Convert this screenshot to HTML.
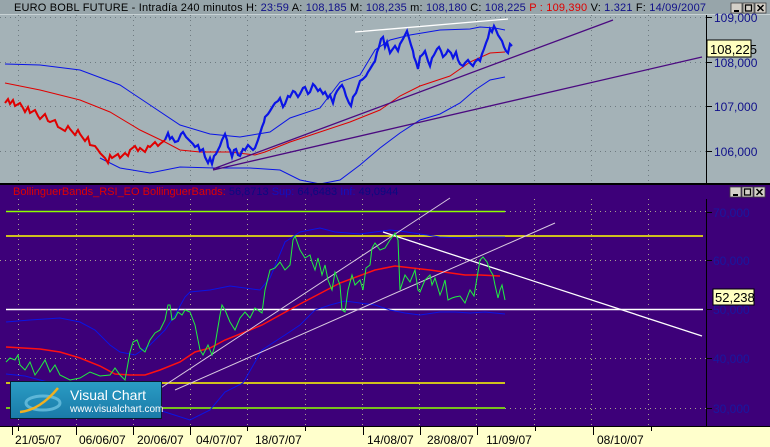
<!DOCTYPE html>
<html><head><meta charset="utf-8"><style>
html,body{margin:0;padding:0;width:770px;height:447px;overflow:hidden;background:#a4b2b7}
svg{display:block;font-family:"Liberation Sans",sans-serif}
</style></head><body>
<svg width="770" height="447" viewBox="0 0 770 447" xmlns="http://www.w3.org/2000/svg">
<rect x="0" y="0" width="770" height="184" fill="#a4b2b7"/>
<rect x="0" y="0" width="770" height="14" fill="#97a5aa"/>
<line x1="0" y1="14.5" x2="770" y2="14.5" stroke="#c8d2d5"/>
<text x="14" y="11" font-size="11" fill="#000" textLength="692" lengthAdjust="spacing">EURO BOBL FUTURE - Intradía 240 minutos  H: <tspan fill="#10108a">23:59</tspan>  A: <tspan fill="#10108a">108,185</tspan>  M: <tspan fill="#10108a">108,235</tspan>  m: <tspan fill="#10108a">108,180</tspan>  C: <tspan fill="#10108a">108,225</tspan>  <tspan fill="#e00000">P : 109,390</tspan>  V: <tspan fill="#10108a">1.321</tspan>  F: <tspan fill="#10108a">14/09/2007</tspan></text>
<g fill="#d4d0c8" stroke="#404040" stroke-width="0.8">
<rect x="731" y="3" width="11" height="10"/><rect x="743" y="3" width="11" height="10"/><rect x="755" y="3" width="11" height="10"/></g>
<line x1="734" y1="11" x2="739" y2="11" stroke="#000" stroke-width="2"/>
<rect x="745.5" y="5" width="6" height="6" fill="none" stroke="#000" stroke-width="1.3"/>
<path d="M757.5 5l6 6M763.5 5l-6 6" stroke="#000" stroke-width="1.5"/>
<g stroke="#6e7a80" stroke-dasharray="1 4" stroke-width="1">
<path d="M18.5 15V183M76.5 15V183M133.5 15V183M190.5 15V183M247.5 15V183M305.5 15V183M362.5 15V183M419.5 15V183M476.5 15V183M534.5 15V183M591.5 15V183M648.5 15V183"/>
<path d="M0 17.5H706M0 62.5H706M0 106.5H706M0 151.5H706"/>
</g>
<line x1="706.5" y1="15" x2="706.5" y2="184" stroke="#000"/>
<g font-size="12" fill="#10108a"><text x="714" y="22">109,000</text><text x="714" y="67">108,000</text><text x="714" y="111">107,000</text><text x="714" y="156">106,000</text></g>
<path d="M706 17.5h6M706 62.5h6M706 106.5h6M706 151.5h6" stroke="#000"/>
<polyline fill="none" stroke="#0a14e6" stroke-width="1" points="5,64 40,65 80,70 120,85 150,105 180,125 210,134 240,137 270,132 290,118 320,108 340,82 360,75 375,50 390,40 410,35 440,30 470,29 480,27 495,28 505,30"/>
<polyline fill="none" stroke="#0a14e6" stroke-width="1" points="100,158 120,168 150,173 180,167 215,168 250,168 280,170 300,180 320,184 340,180 360,165 380,148 400,133 420,120 440,114 460,103 475,90 490,80 505,77"/>
<polyline fill="none" stroke="#e00000" stroke-width="1" points="5,83 40,90 80,100 110,112 140,130 165,142 180,150 200,152 230,152 255,155 265,152 290,142 320,132 350,122 380,110 400,96 420,86 450,76 470,62 490,53 505,52"/>
<line x1="213" y1="169" x2="613" y2="20" stroke="#4b0a80" stroke-width="1.3"/>
<line x1="213" y1="170" x2="702" y2="57" stroke="#4b0a80" stroke-width="1.3"/>
<line x1="355" y1="32" x2="508" y2="19" stroke="#fff" stroke-width="1.3"/>
<polyline fill="none" stroke="#e00000" stroke-width="2" points="5,103 8,99 10,104 13,100 15,106 20,103 23,108 25,112 28,107 30,113 35,110 38,116 40,119 45,114 48,121 50,122 55,120 58,127 60,128 65,131 68,126 70,129 75,135 78,130 80,134 85,141 88,137 90,145 95,146 98,150 100,153 105,158 108,163 110,155 112,158 118,154 120,158 125,153 128,156 130,150 135,146 138,151 140,148 145,152 148,146 150,147 155,142 158,146 160,144 165,140"/>
<polyline fill="none" stroke="#0a14e6" stroke-width="2.2" points="165,140 168,133 170,139 172,137 175,142 178,141 181,134 183,132 186,137 190,141 193,144 195,147 198,145 200,151 203,149 205,157 208,163 210,158 212,164 214,156 216,154 218,150 220,146 222,140 225,134 227,140 228,147 230,150 232,157 234,150 236,149 238,155 240,156 243,149 245,150 248,145 250,147 253,150 255,148 258,140 262,127 264,122 265,117 268,114 270,111 273,106 275,103 278,101 280,98 283,107 285,104 288,96 290,97 293,91 295,92 298,97 300,94 303,88 305,87 308,94 310,92 313,84 315,86 318,91 320,89 323,94 325,92 328,98 330,95 333,103 335,95 337,91 340,87 342,85 344,89 346,96 349,103 351,106 353,97 356,93 358,87 360,81 363,79 366,76 368,72 370,69 373,64 375,61 377,52 379,47 381,39 383,37 385,47 387,42 390,53 392,50 395,46 398,51 400,44 403,39 405,35 407,31 409,38 411,45 413,51 414,57 416,62 418,69 420,57 423,54 425,51 428,61 430,66 432,58 434,55 437,49 439,47 441,51 443,57 446,54 448,50 451,53 453,58 456,52 458,60 460,64 463,66 465,63 468,60 470,63 473,66 475,62 478,59 480,61 482,54 484,49 486,43 488,38 490,29 492,32 494,26 496,30 498,35 500,38 502,41 504,47 506,51 508,53 510,44 512,46"/>
<rect x="707" y="40" width="44" height="17" fill="#ffffc0" stroke="#000"/>
<text x="710" y="54" font-size="13" fill="#000">108,225</text>
<rect x="0" y="183" width="770" height="2" fill="#000"/>
<rect x="0" y="185" width="770" height="241" fill="#3d0079"/>
<text x="13" y="195" font-size="11" fill="#e00000">BollinguerBands_RSI_EO  BollinguerBands: <tspan fill="#0a0a80">56,8713</tspan>  <tspan fill="#1010c0">Sup:</tspan> <tspan fill="#0a0a80">64,6483</tspan>  <tspan fill="#1010c0">Inf:</tspan> <tspan fill="#0a0a80">49,0944</tspan></text>
<g fill="#d4d0c8" stroke="#404040" stroke-width="0.8">
<rect x="730" y="187" width="11" height="10"/><rect x="742" y="187" width="11" height="10"/><rect x="754" y="187" width="11" height="10"/></g>
<line x1="733" y1="195" x2="738" y2="195" stroke="#000" stroke-width="2"/>
<rect x="744.5" y="189" width="6" height="6" fill="none" stroke="#000" stroke-width="1.3"/>
<path d="M756.5 189l6 6M762.5 189l-6 6" stroke="#000" stroke-width="1.5"/>
<g stroke="#a8a090" stroke-dasharray="1 4" stroke-width="1">
<path d="M18.5 199V426M76.5 199V426M133.5 199V426M190.5 199V426M247.5 199V426M305.5 199V426M362.5 199V426M419.5 199V426M476.5 199V426M534.5 199V426M591.5 199V426M648.5 199V426"/>
<path d="M0 260.5H706M0 358.5H706M505 211.5H706M505 408.5H706"/>
</g>
<line x1="706.5" y1="199" x2="706.5" y2="426" stroke="#000"/>
<g font-size="12" fill="#1818a0"><text x="713" y="217">70,000</text><text x="713" y="265">60,000</text><text x="713" y="314">50,000</text><text x="713" y="363">40,000</text><text x="713" y="413">30,000</text></g>
<path d="M706 212.5h6M706 260.5h6M706 309.5h6M706 358.5h6M706 408.5h6" stroke="#000"/>
<g stroke-width="1.5">
<line x1="6" y1="211.5" x2="505" y2="211.5" stroke="#8cff00"/>
<line x1="6" y1="236" x2="703" y2="236" stroke="#ffff00"/>
<line x1="6" y1="309.5" x2="703" y2="309.5" stroke="#fff"/>
<line x1="6" y1="383" x2="505" y2="383" stroke="#ffff00"/>
<line x1="6" y1="408" x2="505" y2="408" stroke="#8cff00"/>
</g>
<polyline fill="none" stroke="#0a14e6" stroke-width="1" points="6,322 30,320 60,318 80,322 95,330 110,345 120,352 135,355 150,345 165,330 175,315 185,297 190,292 210,290 230,286 245,288 260,290 270,278 285,242 300,232 320,228 335,232 360,234 375,232 390,230 400,231 420,234 440,237 460,238 480,237 505,237"/>
<polyline fill="none" stroke="#0a14e6" stroke-width="1" points="6,374 25,376 40,380 100,395 140,405 165,412 190,420 210,410 225,392 243,383 262,350 285,335 300,325 315,310 330,305 345,301 360,303 375,305 390,310 405,313 420,315 440,312 455,312 470,313 485,312 505,314"/>
<polyline fill="none" stroke="#ff1010" stroke-width="1.5" points="6,347 40,349 60,352 80,358 100,366 115,374 130,375 145,375 160,370 180,362 195,352 210,348 225,340 245,332 262,325 300,304 340,283 375,270 395,266 430,270 465,275 480,275 500,276"/>
<line x1="150" y1="395" x2="450" y2="198" stroke="#d8c8e0" stroke-width="1"/>
<line x1="175" y1="390" x2="555" y2="223" stroke="#d8c8e0" stroke-width="1"/>
<line x1="383" y1="232" x2="702" y2="336" stroke="#fff" stroke-width="1.3"/>
<polyline fill="none" stroke="#20f040" stroke-width="1" points="6,362 10,358 15,360 18,355 20,365 25,370 30,362 35,375 40,368 45,360 50,372 55,365 60,375 70,380 80,378 90,372 100,376 110,375 115,368 120,375 125,380 130,352 133,342 137,340 140,348 145,352 150,340 155,333 160,330 165,320 168,305 170,305 172,320 175,318 178,312 182,315 185,310 190,312 195,325 200,350 203,355 208,345 212,355 215,345 220,315 222,305 225,310 230,322 235,330 240,318 245,312 250,318 255,308 262,313 265,290 270,270 275,268 280,262 285,270 290,265 293,240 295,236 300,250 305,258 310,255 312,262 315,270 318,258 322,275 325,265 328,280 332,290 335,272 340,285 342,310 345,312 348,290 352,275 355,285 360,280 363,290 366,268 370,265 372,248 375,243 380,250 385,248 390,240 395,233 398,240 400,290 405,275 410,282 415,270 418,290 420,292 425,280 430,275 432,285 435,278 440,295 442,290 445,280 448,300 452,298 455,297 460,296 465,303 468,295 470,290 474,296 478,272 480,260 483,257 487,262 490,270 493,275 495,285 498,298 500,290 502,285 505,300"/>
<rect x="713" y="289" width="41" height="16" fill="#ffffc0" stroke="#000"/>
<text x="715" y="302" font-size="13" fill="#000">52,238</text>
<defs><linearGradient id="lg" x1="0" y1="0" x2="0" y2="1"><stop offset="0" stop-color="#2a9cc4"/><stop offset="1" stop-color="#1a7aa8"/></linearGradient></defs>
<rect x="10.5" y="381.5" width="151" height="37" fill="url(#lg)" stroke="#0a1a30"/>
<ellipse cx="43" cy="403" rx="17" ry="7" fill="none" stroke="#6cc0e0" stroke-width="3" opacity="0.8"/>
<path d="M20 412 Q40 410 58 388" stroke="#f0b020" stroke-width="2.5" fill="none"/>
<text x="70" y="400" font-size="14" fill="#fff">Visual Chart</text>
<text x="70" y="412" font-size="10" fill="#fff">www.visualchart.com</text>
<rect x="0" y="426" width="770" height="21" fill="#ffffcc"/>
<line x1="0" y1="426.5" x2="770" y2="426.5" stroke="#000"/>
<path d="M12.5 427v8M18.5 427v4M76.5 427v8M133.5 427v8M190.5 427v8M247.5 427v4M305.5 427v4M363.5 427v8M420.5 427v8M477.5 427v8M535.5 427v4M593.5 427v8M651.5 427v4" stroke="#000"/>
<g font-size="12" fill="#000"><text x="15" y="444">21/05/07</text><text x="79" y="444">06/06/07</text><text x="137" y="444">20/06/07</text><text x="196" y="444">04/07/07</text><text x="255" y="444">18/07/07</text><text x="367" y="444">14/08/07</text><text x="427" y="444">28/08/07</text><text x="486" y="444">11/09/07</text><text x="597" y="444">08/10/07</text></g>
</svg>
</body></html>
